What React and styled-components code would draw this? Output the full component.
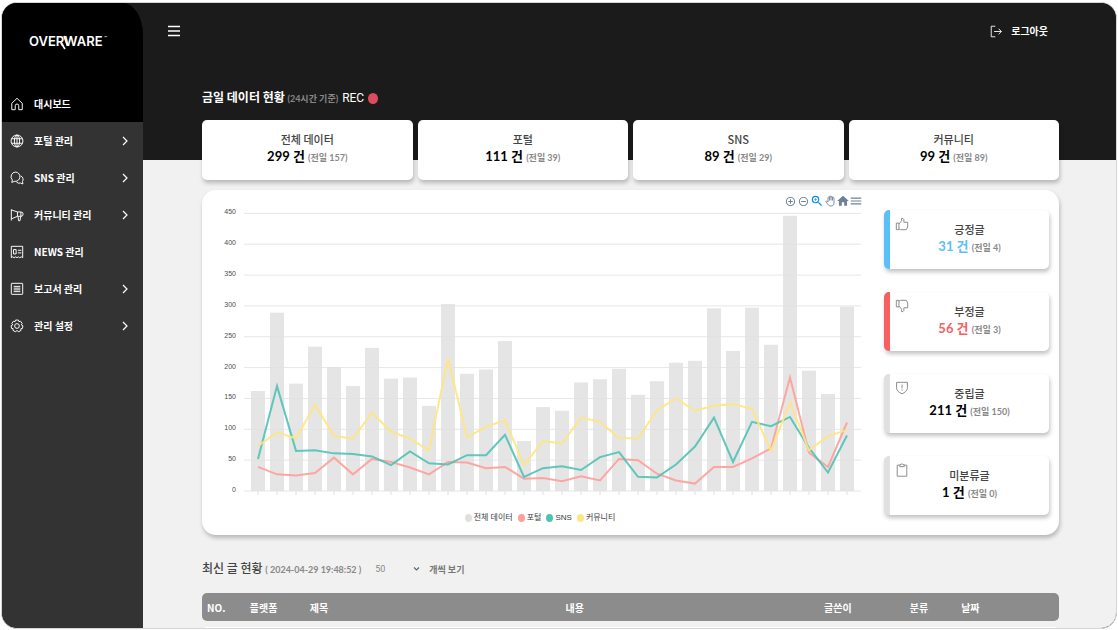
import React from 'react';
import styled, { createGlobalStyle, css } from 'styled-components';
import { MdAddCircleOutline, MdRemoveCircleOutline, MdZoomIn, MdHome, MdMenu } from 'react-icons/md';

const GlobalStyle = createGlobalStyle`
  *, *::before, *::after { box-sizing: border-box; }
  body {
    margin: 0;
    background: #fff;
    color: #444;
    font-family: "Noto Sans CJK KR", sans-serif;
    font-size: 10px;
  }
  button, select { font: inherit; color: inherit; background: none; border: 0; padding: 0; margin: 0; }
  button { cursor: pointer; }
  a { color: inherit; text-decoration: none; }
  h1, h2, p, ul { margin: 0; padding: 0; }
`;

/* ---------- shell ---------- */

const Page = styled.div`
  height: 100vh;
  padding: 2px 1px 1px;
`;

const Frame = styled.div`
  display: grid;
  grid-template-columns: 141px 1fr;
  height: 100%;
  overflow: hidden;
  border: 1px solid #d6d6d6;
  border-radius: 16px;
  background: #1b1b1b;
`;

const Sidebar = styled.aside`
  background: linear-gradient(#1b1b1b 60px, #333 60px);
`;

const SidebarTop = styled.div`
  background: #000;
  border-top-right-radius: 20px 32px;
`;

const Brand = styled.div`
  height: 82px;
  padding: 29px 0 0 27px;
  svg { display: block; overflow: visible; }
`;

const Menu = styled.ul`
  list-style: none;
`;

const MenuLink = styled.a`
  display: grid;
  grid-template-columns: 14px 1fr 8px;
  column-gap: 10px;
  align-items: center;
  height: 37px;
  padding: 0 14px 0 8px;
  color: #fff;
  font-size: 10px;
  font-weight: 700;
  line-height: 16px;
`;

const Icon = styled.svg`
  display: block;
  width: ${(p) => p.$size || 14}px;
  height: ${(p) => p.$size || 14}px;
  fill: none;
  stroke: currentColor;
  stroke-width: 1.1;
  stroke-linejoin: round;
`;

const Main = styled.main`
  min-width: 0;
  background: linear-gradient(#1b1b1b 157px, #f1f1f1 157px);
`;

const TopBar = styled.header`
  display: flex;
  justify-content: space-between;
  align-items: center;
  height: 56px;
  padding: 0 68px 0 25px;
  color: #fff;
`;

const LogoutButton = styled.button`
  display: flex;
  align-items: center;
  gap: 8px;
  font-size: 10px;
  font-weight: 700;
  line-height: 16px;
`;

const Content = styled.div`
  padding: 30px 57px 0 59px;
`;

/* ---------- headings ---------- */

const TitleRow = styled.div`
  display: flex;
  align-items: center;
  height: 18px;
  margin-bottom: 13px;
`;

const Title = styled.h1`
  color: ${(p) => (p.$dark ? '#fff' : '#444')};
  font-size: 12px;
  font-weight: ${(p) => (p.$dark ? 700 : 500)};
  line-height: 18px;
  white-space: nowrap;
`;

const Note = styled.small`
  color: #888;
  font-family: Lato, "Noto Sans CJK KR", sans-serif;
  font-size: ${(p) => p.$size || 9}px;
  font-weight: 700;
`;

const Recording = styled.span`
  display: flex;
  align-items: center;
  gap: 4px;
  margin-left: 4px;
  color: #fff;
  font: 12px/18px Roboto, sans-serif;
  &::after {
    content: "";
    width: 10px;
    height: 11px;
    border-radius: 50%;
    background: #dc4c5e;
  }
`;

/* ---------- figures ---------- */

const Summary = styled.section`
  display: grid;
  grid-template-columns: repeat(4, 1fr);
  gap: 5px;
`;

const cardSurface = css`
  background: #fff;
  border-radius: 5px;
  box-shadow: 1px 3px 4px rgba(0, 0, 0, 0.24);
  text-align: center;
`;

const SummaryCard = styled.article`
  ${cardSurface}
  height: 60px;
  padding-top: 10px;
`;

const Label = styled.p`
  color: #444;
  font-size: 11px;
  font-weight: 500;
  line-height: 18px;
`;

const Figure = styled.p`
  color: ${(p) => p.$color || '#000'};
  font-family: Lato, "Noto Sans CJK KR", sans-serif;
  font-size: 13px;
  font-weight: 700;
  line-height: 17px;
`;

const Panel = styled.section`
  display: grid;
  grid-template-columns: minmax(0, 1fr) 165px;
  column-gap: 22px;
  margin-top: 10px;
  padding: 0 10px;
  background: #fff;
  border-radius: 14px;
  box-shadow: 1px 3px 4px rgba(0, 0, 0, 0.24);
`;

const SideCards = styled.div`
  display: grid;
  gap: 23px;
  padding: 20px 0;
`;

const SideCard = styled.article`
  ${cardSurface}
  display: grid;
  height: 59px;
  border-left: 6px solid ${(p) => p.$accent};
  > * { grid-area: 1 / 1; }
`;

const SideIcon = styled.div`
  padding: 7px 5px;
  color: #888;
`;

const SideText = styled.div`
  padding-top: 10px;
`;

/* ---------- chart ---------- */

const ChartBox = styled.div`
  padding-top: 5px;
`;

const Toolbar = styled.div`
  display: flex;
  justify-content: flex-end;
  height: 12px;
`;

const Tool = styled.button`
  display: flex;
  justify-content: center;
  align-items: center;
  width: 13px;
  height: 12px;
  color: ${(p) => (p.$active ? '#008ffb' : '#6e8192')};
  svg { flex: none; width: ${(p) => p.$size || 14}px; height: ${(p) => p.$size || 14}px; }
`;

const ChartSvg = styled.svg`
  display: block;
  width: 100%;
  height: auto;
  text { font: 7px "Liberation Sans", sans-serif; fill: #4a4f51; text-anchor: end; }
`;

const Legend = styled.ul`
  display: flex;
  justify-content: center;
  gap: 5px;
  padding: 10px 0 0 6px;
  list-style: none;
  color: #373d3f;
  font: 8px/16px "Liberation Sans", "Noto Sans CJK KR", sans-serif;
`;

const LegendItem = styled.li`
  display: flex;
  align-items: center;
  gap: 2px;
  &::before {
    content: "";
    width: 7px;
    height: 8px;
    border-radius: 50%;
    background: ${(p) => p.$color};
  }
`;

/* ---------- table ---------- */

const ListHead = styled.div`
  display: flex;
  align-items: center;
  margin-top: 24px;
  height: 20px;
`;

const PageSize = styled.label`
  display: flex;
  align-items: center;
  gap: 9px;
  margin-left: 14px;
  color: #777;
  font-size: 9px;
  font-weight: 700;
`;

const SelectBox = styled.span`
  display: grid;
  align-items: center;
  width: 45px;
  > * { grid-area: 1 / 1; }
  svg { justify-self: end; pointer-events: none; }
`;

const Select = styled.select`
  appearance: none;
  width: 100%;
  color: #888;
  font: 9px/16px Roboto, sans-serif;
`;

const Table = styled.table`
  width: 100%;
  margin-top: 8px;
  border-collapse: separate;
  border-spacing: 0 6px;
  table-layout: fixed;
`;

const Th = styled.th`
  height: 28px;
  padding: 0 5px;
  background: #8c8c8c;
  color: #fff;
  font-size: 10px;
  font-weight: 700;
  text-align: ${(p) => p.$align || 'left'};
  width: ${(p) => p.$width || 'auto'};
  white-space: nowrap;
  &:first-child { border-radius: 5px 0 0 5px; }
  &:last-child { border-radius: 0 5px 5px 0; }
`;

const Td = styled.td`
  height: 28px;
  background: #fff;
  &:first-child { border-radius: 5px 0 0 5px; }
  &:last-child { border-radius: 0 5px 5px 0; }
`;

/* ---------- icon drawings, 16 x 16 ---------- */

const shapes = {
  home: <path d="M2 14.5V7.2L8 1.5l6 5.700v7.300H10V10a2 2 0 0 0-4 0v4.500z" />,
  globe: (
    <>
      <circle cx="8" cy="8" r="6.8" />
      <ellipse cx="8" cy="8" rx="3" ry="6.8" />
      <path d="M8 1.2v13.6M1.800 5.400h12.400M1.800 10.600h12.400" />
    </>
  ),
  chat: (
    <>
      <path d="M6.600 1.200a5.300 5.300 0 0 0-3.900 9L2 13l3.400-1.200a5.300 5.300 0 1 0 1.200-10.600z" />
      <path d="M12.200 5.600a4.400 4.400 0 0 1 2 6.600l.6 2.600-2.800-1a4.600 4.600 0 0 1-4.800-1.400" />
    </>
  ),
  megaphone: (
    <path d="M1.500 1.500v12.800M1.500 2.200l7 2.300h4a2.300 2.300 0 0 1 0 5h-4l-7 3M8.500 4.500v5M9.200 9.700l.6 4.800h1.600l1-5V4.600" />
  ),
  news: (
    <>
      <path d="M1.500 14.500v-13h13v13l-1.600-1-1.700 1-1.600-1-1.600 1-1.600-1-1.700 1-1.600-1z" />
      <path d="M4 5.200h3v5H4zM9 6h4M9 9h4" />
    </>
  ),
  report: (
    <>
      <rect x="1.5" y="1.5" width="13" height="12.6" rx=".6" />
      <path d="M4.200 5h7.600M4.200 7h7.600M4.200 9h7.600M4.200 11h7.600" />
    </>
  ),
  settings: (
    <>
      <path d="M6.400 1.200h3.200l.6 1.800 1.900-.4 1.800 2.500-1 1.600 1.800 1-.4 3-1.900.4.200 1.900-2.600 1.600L8 13.200l-2 1.400L3.400 13l.2-1.900-1.900-.4-.4-3 1.800-1-1-1.600 1.800-2.500 1.900.4z" />
      <circle cx="8" cy="8" r="2.7" />
    </>
  ),
  logout: <path d="M6.500 1.500h-5v13h5M5 8h9M10.600 4.600 14 8l-3.400 3.400" />,
  up: <path d="M1.500 7h3v7.500h-3zM4.500 8l3-3.600V1.600h1.600l1 1V6h4.400v5.400l-1.600 3.100H6.200l-1.700-1" />,
  down: <path d="M1.500 9h3V1.500h-3zM4.500 8l3 3.600v2.800h1.600l1-1V10h4.400V4.600l-1.600-3.100H6.200l-1.700 1" />,
  shield: <path d="M1.800 1.500h12.400v6.300c0 3-3 5.600-6.200 6.800-3.200-1.200-6.200-3.800-6.200-6.800zM8 4v4.400M8 9.600v1.400" />,
  clipboard: <path d="M5.500 2.500h-3v12.600h11V2.500h-3M5.500 1.800h1.200a1.400 1.400 0 0 1 2.600 0h1.200v2.400h-5z" />,
};

const Glyph = ({ name, size }) => (
  <Icon viewBox="0 0 16 16" $size={size} aria-hidden="true">{shapes[name]}</Icon>
);

const Chevron = () => (
  <svg width="8" height="10" viewBox="0 0 8 10" fill="none" stroke="#fff" strokeWidth="1.2" aria-hidden="true">
    <path d="M2 1l4 4-4 4" />
  </svg>
);

const Logo = () => (
  <svg width="82" height="20" viewBox="0 0 82 20" role="img" aria-label="OVERWARE">
    <text x="0" y="14" fill="#fff" fontFamily="Inter, sans-serif" fontWeight="600" fontSize="13">OVERWARE</text>
    <path d="M35 4l3.500 10M32 11l4 6" stroke="#fff" strokeWidth="1.6" fill="none" />
    <text x="75" y="8" fill="#fff" fontFamily="Inter, sans-serif" fontSize="5">™</text>
  </svg>
);

/* ---------- data ---------- */

const menu = [
  { icon: 'globe', label: '포털 관리', more: true },
  { icon: 'chat', label: 'SNS 관리', more: true },
  { icon: 'megaphone', label: '커뮤니티 관리', more: true },
  { icon: 'news', label: 'NEWS 관리' },
  { icon: 'report', label: '보고서 관리', more: true },
  { icon: 'settings', label: '관리 설정', more: true },
];

const summary = [
  { label: '전체 데이터', count: 299, before: 157 },
  { label: '포털', count: 111, before: 39 },
  { label: 'SNS', count: 89, before: 29 },
  { label: '커뮤니티', count: 99, before: 89 },
];

const moods = [
  { icon: 'up', label: '긍정글', count: 31, before: 4, accent: '#5bc0f8', color: '#5bc0f8' },
  { icon: 'down', label: '부정글', count: 56, before: 3, accent: '#f86060', color: '#f86060' },
  { icon: 'shield', label: '중립글', count: 211, before: 150, accent: '#e0e0e0' },
  { icon: 'clipboard', label: '미분류글', count: 1, before: 0, accent: '#e0e0e0' },
];

const total = [162, 289, 174, 234, 201, 170, 232, 182, 184, 138, 303, 190, 197, 243, 81, 136, 130, 176, 181, 198, 156, 178, 208, 211, 296, 227, 297, 237, 446, 195, 157, 299];

const series = [
  { name: '포털', color: '#ff9f99', values: [39, 27, 25, 29, 54, 27, 52, 47, 38, 27, 47, 46, 37, 39, 20, 21, 16, 24, 17, 52, 50, 28, 17, 12, 39, 39, 53, 69, 184, 62, 39, 111] },
  { name: 'SNS', color: '#4fc2b6', values: [52, 170, 65, 66, 61, 60, 56, 42, 64, 45, 43, 58, 58, 91, 23, 37, 40, 34, 55, 63, 23, 22, 43, 72, 119, 47, 112, 105, 120, 70, 30, 90] },
  { name: '커뮤니티', color: '#ffe680', values: [73, 95, 85, 140, 89, 85, 127, 96, 85, 66, 215, 87, 104, 115, 42, 81, 77, 119, 112, 86, 85, 131, 150, 130, 138, 141, 133, 65, 144, 66, 89, 99] },
];

const columns = [
  { label: 'NO.', width: '5%' },
  { label: '플랫폼', width: '7%' },
  { label: '제목', width: '3%' },
  { label: '내용', align: 'center' },
  { label: '글쓴이', width: '10%' },
  { label: '분류', width: '6%' },
  { label: '날짜', width: '12%' },
];

const xAt = (i) => 46 + i * 19;
const yAt = (v) => 284 - v * 0.617;
const ticks = [0, 50, 100, 150, 200, 250, 300, 350, 400, 450];

const Chart = () => (
  <ChartSvg viewBox="0 0 650 293" role="img" aria-label="금일 데이터 현황">
    {ticks.map((t) => (
      <g key={t}>
        <line x1="32" x2="649" y1={yAt(t)} y2={yAt(t)} stroke="#e6e6e6" />
        <text x="24" y={yAt(t) + 1}>{t}</text>
      </g>
    ))}
    {total.map((v, i) => (
      <g key={i}>
        <rect x={xAt(i) - 7} y={yAt(v)} width="14" height={v * 0.617} fill="#e0e0e0" fillOpacity=".85" />
        <line x1={xAt(i)} x2={xAt(i)} y1="284" y2="288" stroke="#e0e0e0" />
      </g>
    ))}
    {series.map((s) => (
      <polyline
        key={s.name}
        points={s.values.map((v, i) => `${xAt(i)},${yAt(v)}`).join(' ')}
        fill="none"
        stroke={s.color}
        strokeWidth="2"
        strokeOpacity=".9"
      />
    ))}
  </ChartSvg>
);

const Hand = () => (
  <svg viewBox="0 0 24 24" fill="none" stroke="currentColor" strokeWidth="1.8" strokeLinejoin="round">
    <path d="M8 14V5.500a1.500 1.500 0 0 1 3 0V3.500a1.500 1.500 0 0 1 3 0v1a1.500 1.500 0 0 1 3 0v2a1.500 1.500 0 0 1 3 0V16c0 4-2.500 6-6 6-4 0-5.500-2-7-4.500L3.500 13c1-1.500 2.500-1 4.500 1z" />
    <path d="M11 5v6M14 4v7M17 6v5" />
  </svg>
);

const Stat = ({ label, count, before, color }) => (
  <>
    <Label>{label}</Label>
    <Figure $color={color}>{count} 건 <Note>(전일 {before})</Note></Figure>
  </>
);

export default function App() {
  return (
    <>
      <GlobalStyle />
      <Page>
        <Frame>
          <Sidebar>
            <SidebarTop>
              <Brand><Logo /></Brand>
              <MenuLink href="#dashboard"><Glyph name="home" />대시보드</MenuLink>
            </SidebarTop>
            <nav>
              <Menu>
                {menu.map((m) => (
                  <li key={m.label}>
                    <MenuLink href="#menu">
                      <Glyph name={m.icon} />
                      {m.label}
                      {m.more && <Chevron />}
                    </MenuLink>
                  </li>
                ))}
              </Menu>
            </nav>
          </Sidebar>
          <Main>
            <TopBar>
              <button type="button" aria-label="메뉴">
                <svg width="13" height="12" viewBox="0 0 13 12" stroke="#fff" strokeWidth="1.3" display="block">
                  <path d="M0 1.500h12M0 6h12M0 10.500h12" />
                </svg>
              </button>
              <LogoutButton type="button"><Glyph name="logout" size={13} />로그아웃</LogoutButton>
            </TopBar>
            <Content>
              <TitleRow>
                <Title $dark>금일 데이터 현황 <Note>(24시간 기준)</Note></Title>
                <Recording>REC</Recording>
              </TitleRow>
              <Summary>
                {summary.map((s) => (
                  <SummaryCard key={s.label}><Stat {...s} /></SummaryCard>
                ))}
              </Summary>
              <Panel>
                <ChartBox>
                  <Toolbar>
                    <Tool type="button" aria-label="확대" $size={11}><MdAddCircleOutline /></Tool>
                    <Tool type="button" aria-label="축소" $size={11}><MdRemoveCircleOutline /></Tool>
                    <Tool type="button" aria-label="선택 확대" $active><MdZoomIn /></Tool>
                    <Tool type="button" aria-label="이동" $size={12}><Hand /></Tool>
                    <Tool type="button" aria-label="초기화"><MdHome /></Tool>
                    <Tool type="button" aria-label="내보내기"><MdMenu /></Tool>
                  </Toolbar>
                  <Chart />
                  <Legend>
                    <LegendItem $color="#e0e0e0">전체 데이터</LegendItem>
                    {series.map((s) => (
                      <LegendItem key={s.name} $color={s.color}>{s.name}</LegendItem>
                    ))}
                  </Legend>
                </ChartBox>
                <SideCards>
                  {moods.map((m) => (
                    <SideCard key={m.label} $accent={m.accent}>
                      <SideIcon><Glyph name={m.icon} /></SideIcon>
                      <SideText><Stat {...m} /></SideText>
                    </SideCard>
                  ))}
                </SideCards>
              </Panel>
              <ListHead>
                <Title as="h2">최신 글 현황 <Note>( 2024-04-29 19:48:52 )</Note></Title>
                <PageSize>
                  <SelectBox>
                    <Select defaultValue="50">
                      <option>50</option>
                      <option>100</option>
                    </Select>
                    <svg width="7" height="6" viewBox="0 0 7 6" fill="none" stroke="#666" strokeWidth="1.2">
                      <path d="M1 1.500l2.500 2.500L6 1.500" />
                    </svg>
                  </SelectBox>
                  개씩 보기
                </PageSize>
              </ListHead>
              <Table>
                <thead>
                  <tr>
                    {columns.map((c) => (
                      <Th key={c.label} scope="col" $width={c.width} $align={c.align}>{c.label}</Th>
                    ))}
                  </tr>
                </thead>
                <tbody>
                  <tr>
                    {columns.map((c) => <Td key={c.label} />)}
                  </tr>
                </tbody>
              </Table>
            </Content>
          </Main>
        </Frame>
      </Page>
    </>
  );
}
